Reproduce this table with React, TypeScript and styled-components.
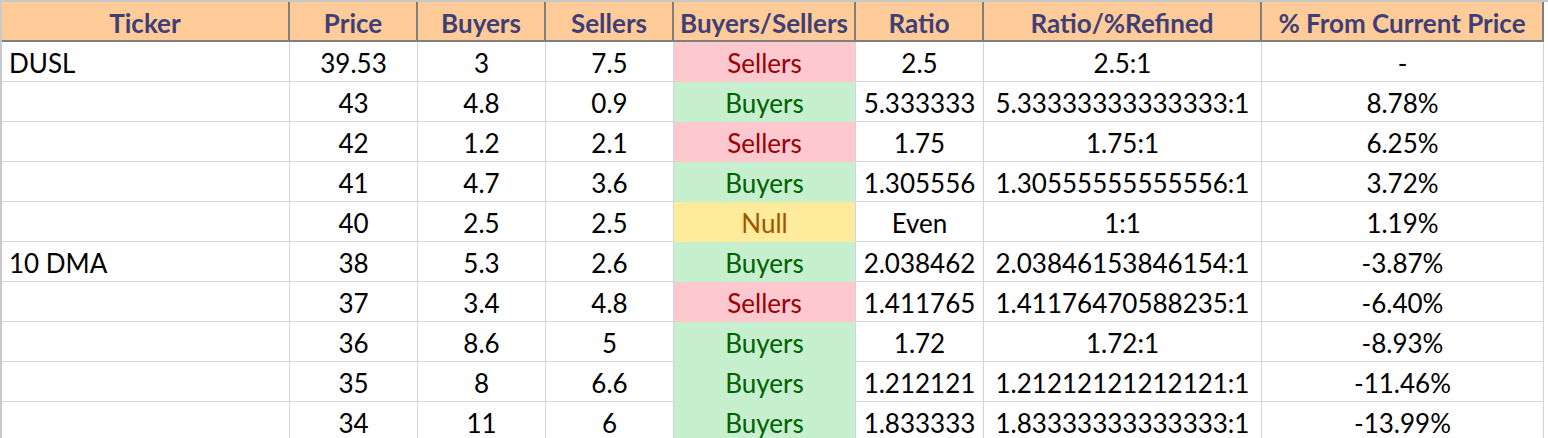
import React from "react";
import styled, { createGlobalStyle, css } from "styled-components";

const Global = createGlobalStyle`
  html, body { margin: 0; padding: 0; background: #ffffff; }
  body { font-family: Lato, "Open Sans", "Liberation Sans", sans-serif; }
`;

const COLS = "288px 128px 128px 128px 182px 128px 278px 282px";

const Sheet = styled.div`
  width: 1548px;
  height: 438px;
  overflow: hidden;
  box-sizing: border-box;
  border-top: 2px solid #c8c8c8;
  border-left: 2px solid #c8c8c8;
  background: #ffffff;
`;

const Grid = styled.div`
  display: grid;
  grid-template-columns: ${COLS};
`;

const HeadCell = styled.div`
  box-sizing: border-box;
  height: 40px;
  padding-top: 4px;
  background: #ffcc99;
  border-right: 2px solid #7f7f7f;
  border-bottom: 2px solid #7f7f7f;
  color: #3f3f76;
  font-weight: 700;
  font-size: 26px;
  display: flex;
  align-items: center;
  justify-content: center;
  white-space: nowrap;
`;

type Tone = "none" | "bad" | "good" | "neutral";

const tones: Record<Tone, { bg: string; fg: string }> = {
  none: { bg: "#ffffff", fg: "#000000" },
  bad: { bg: "#ffc7ce", fg: "#9c0006" },
  good: { bg: "#c6efce", fg: "#006100" },
  neutral: { bg: "#ffeb9c", fg: "#9c5700" },
};

const Cell = styled.div<{ $align?: "left" | "center"; $tone?: Tone }>`
  box-sizing: border-box;
  height: 40px;
  padding-top: 2px;
  border-right: 1px solid #d4d4d4;
  border-bottom: 1px solid #d4d4d4;
  font-size: 26px;
  display: flex;
  align-items: center;
  white-space: nowrap;
  justify-content: ${(p) => (p.$align === "left" ? "flex-start" : "center")};
  padding-left: ${(p) => (p.$align === "left" ? "7px" : "0")};
  background: ${(p) => tones[p.$tone ?? "none"].bg};
  color: ${(p) => tones[p.$tone ?? "none"].fg};
  ${(p) =>
    p.$tone && p.$tone !== "none"
      ? css`
          border-bottom-color: transparent;
        `
      : ""}
`;

const headers = [
  "Ticker",
  "Price",
  "Buyers",
  "Sellers",
  "Buyers/Sellers",
  "Ratio",
  "Ratio/%Refined",
  "% From Current Price",
];

type Row = [string, string, string, string, string, string, string, string];

const rows: Row[] = [
  ["DUSL", "39.53", "3", "7.5", "Sellers", "2.5", "2.5:1", "-"],
  ["", "43", "4.8", "0.9", "Buyers", "5.333333", "5.33333333333333:1", "8.78%"],
  ["", "42", "1.2", "2.1", "Sellers", "1.75", "1.75:1", "6.25%"],
  ["", "41", "4.7", "3.6", "Buyers", "1.305556", "1.30555555555556:1", "3.72%"],
  ["", "40", "2.5", "2.5", "Null", "Even", "1:1", "1.19%"],
  ["10 DMA", "38", "5.3", "2.6", "Buyers", "2.038462", "2.03846153846154:1", "-3.87%"],
  ["", "37", "3.4", "4.8", "Sellers", "1.411765", "1.41176470588235:1", "-6.40%"],
  ["", "36", "8.6", "5", "Buyers", "1.72", "1.72:1", "-8.93%"],
  ["", "35", "8", "6.6", "Buyers", "1.212121", "1.21212121212121:1", "-11.46%"],
  ["", "34", "11", "6", "Buyers", "1.833333", "1.83333333333333:1", "-13.99%"],
];

const toneFor = (v: string): Tone =>
  v === "Sellers" ? "bad" : v === "Buyers" ? "good" : v === "Null" ? "neutral" : "none";

export default function App() {
  return (
    <>
      <Global />
      <Sheet>
        <Grid>
          {headers.map((h) => (
            <HeadCell key={h}>{h}</HeadCell>
          ))}
          {rows.map((r, i) =>
            r.map((v, j) => (
              <Cell
                key={`${i}-${j}`}
                $align={j === 0 ? "left" : "center"}
                $tone={j === 4 ? toneFor(v) : "none"}
              >
                {v}
              </Cell>
            ))
          )}
        </Grid>
      </Sheet>
    </>
  );
}
